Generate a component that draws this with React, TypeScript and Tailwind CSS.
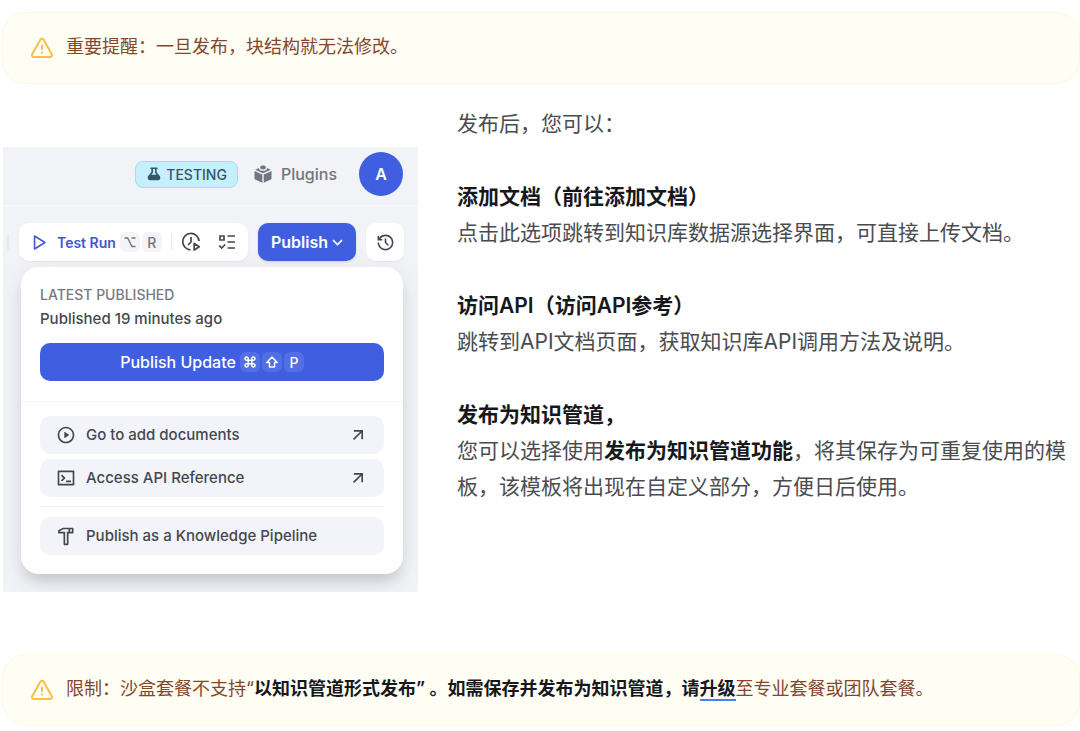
import React from 'react';
import {
  RiArrowDownSLine,
  RiArrowRightUpLine,
  RiHammerLine,
  RiHistoryLine,
  RiPlayCircleLine,
  RiPlayLargeLine,
  RiTerminalBoxLine,
} from 'react-icons/ri';

const WarningIcon = () => (
  <svg className="h-6 w-6 shrink-0 text-[#f7bf45]" viewBox="0 0 24 24" fill="none" stroke="currentColor" strokeWidth="2" strokeLinecap="round" strokeLinejoin="round">
    <path d="M10.5 3.6 2.2 18.2A1.8 1.8 0 0 0 3.8 21h16.4a1.8 1.8 0 0 0 1.6-2.8L13.5 3.6a1.75 1.75 0 0 0-3 0Z" />
    <path d="M12 9.5v3.5M12 16.5v.2" />
  </svg>
);

const FlaskIcon = () => (
  <svg className="h-4 w-4" viewBox="0 0 16 16" fill="none">
    <path d="M5 2.200h6M6.200 2.500v3.700L4.200 9M9.800 2.500v3.700l2 2.800" stroke="currentColor" strokeWidth="1.600" strokeLinecap="round" strokeLinejoin="round" />
    <path d="M4.200 8.800h7.600c1.700 0 2.500 1.400 2.500 2.900 0 1.600-.8 2.500-2.300 2.500H4c-1.500 0-2.300-.9-2.300-2.500 0-1.500.8-2.900 2.500-2.900Z" fill="currentColor" />
  </svg>
);

const PluginIcon = () => (
  <svg className="h-5 w-5" viewBox="0 0 20 20" fill="currentColor">
    <path d="M7.2 3.1c0-.9 1.2-1.6 2.8-1.6s2.8.7 2.8 1.6v.7c0 .9-1.2 1.6-2.8 1.6s-2.8-.7-2.8-1.6v-.7Z" />
    <path d="M6 4 2.2 5.8 10 9.3l7.8-3.5L14 4v.4C14 5.800 12.300 6.800 10 6.800S6 5.800 6 4.400V4Z" />
    <path d="M1.500 7 9.300 10.500v8.200l-7.200-3.300a1 1 0 0 1-.6-.9V7ZM18.500 7l-7.800 3.500v8.200l7.200-3.300a1 1 0 0 0 .6-.9V7Z" />
  </svg>
);

const ClockPlayIcon = () => (
  <svg className="h-5 w-5" viewBox="0 0 20 20" fill="none" stroke="currentColor" strokeWidth="1.700" strokeLinejoin="round">
    <path d="M9.500 17.800A8.200 8.200 0 1 1 18.100 9" />
    <path d="M10 5v5l-3 3" />
    <path d="M13.200 11.500v6.500l5-3.250-5-3.250Z" />
  </svg>
);

const ChecklistIcon = () => (
  <svg className="h-5 w-5" viewBox="0 0 20 20" fill="none" stroke="currentColor" strokeWidth="1.700">
    <path d="M3 4h4v4H3zM10.500 4H18M10.500 10H18M10.500 16H18M2.300 13.500 4.700 16l3.500-3.500" />
  </svg>
);

const OptionKey = () => (
  <svg className="h-3 w-3" viewBox="0 0 12 12" fill="none" stroke="currentColor" strokeWidth="1.400">
    <path d="M.5 2h3.200l4.300 8.500h3.500M7.500 2h4" />
  </svg>
);

const CommandKey = () => (
  <svg className="h-3 w-3" viewBox="0 0 12 12" fill="none" stroke="currentColor" strokeWidth="1.500">
    <path d="M4.200 4.200h3.600v3.600H4.200zM4.200 4.200V2.700a1.600 1.600 0 1 0-1.600 1.500h1.600ZM7.800 4.200V2.700a1.600 1.600 0 1 1 1.600 1.500H7.800ZM4.200 7.800v1.500a1.600 1.600 0 1 1-1.600-1.500h1.600ZM7.800 7.800v1.500a1.600 1.600 0 1 0 1.600-1.500H7.800Z" />
  </svg>
);

const ShiftKey = () => (
  <svg className="h-3 w-3" viewBox="0 0 12 12" fill="none" stroke="currentColor" strokeWidth="1.500" strokeLinejoin="round">
    <path d="M6 1 .8 6.500h2.700V11h5V6.500h2.700L6 1Z" />
  </svg>
);

const Alert = ({ children }: { children: React.ReactNode }) => (
  <div className="flex items-start gap-3 rounded-3xl border border-[#fbf8dc] bg-[#fffef5] px-[27px] pt-5 pb-[22px]">
    <div className="pt-[3px]">
      <WarningIcon />
    </div>
    <p className="text-[18px] leading-7 text-[#84472a]">{children}</p>
  </div>
);

const MenuItem = ({ icon, label, external }: { icon: React.ReactNode; label: string; external?: boolean }) => (
  <button className="flex h-[38px] w-full items-center gap-2 rounded-[10px] bg-[#f3f4f9] px-4 text-[#44474f]">
    <span className="flex w-[22px] text-[20px]">{icon}</span>
    <span className="flex-1 text-left text-[15px] font-medium">{label}</span>
    {external && <RiArrowRightUpLine className="text-[20px]" />}
  </button>
);

const PublishPanel = () => (
  <div className="w-[415px] shrink-0 overflow-hidden bg-[#f2f3f7] pb-[18px]">
    <div className="flex h-[60px] items-center justify-end border-b-2 border-[#f7f8fb] pr-[15px] pb-1">
      <span className="flex h-[27px] items-center gap-1 rounded-lg border border-[#9edff3] bg-[#c6effc] px-[10px] text-[14px] font-medium text-[#33566a]">
        <FlaskIcon />
        TESTING
      </span>
      <a href="#plugins" className="ml-[15px] flex items-center gap-2 text-[16px] font-medium text-[#73757f]">
        <PluginIcon />
        Plugins
      </a>
      <button className="ml-[22px] flex h-11 w-11 items-center justify-center rounded-full bg-[#3f5fe0] text-[16px] font-semibold text-white">A</button>
    </div>

    <div className="flex items-center pt-4 pr-[14px] pl-1">
      <div className="h-4 w-3 border-l-2 border-[#e8e9ee]" />
      <div className="flex h-[38px] flex-1 items-center rounded-[10px] bg-white px-[10px] text-[#44474f] shadow-xs">
        <button className="flex items-center gap-[9px] text-[14px] font-semibold whitespace-nowrap text-[#4257cf]">
          <RiPlayLargeLine className="text-[19px]" />
          Test Run
        </button>
        <span className="ml-1 flex h-5 w-5 shrink-0 items-center justify-center rounded-md bg-[#f3f4f7] text-[#72747c]">
          <OptionKey />
        </span>
        <span className="ml-[2px] flex h-5 w-5 shrink-0 items-center justify-center rounded-md bg-[#f3f4f7] text-[14px] font-medium text-[#72747c]">R</span>
        <span className="mx-[9px] h-4 w-px bg-[#e6e7ec]" />
        <button aria-label="Run history">
          <ClockPlayIcon />
        </button>
        <button className="ml-4" aria-label="Checklist">
          <ChecklistIcon />
        </button>
      </div>
      <button className="ml-[10px] flex h-[38px] w-[98px] items-center justify-center rounded-[10px] bg-[#3f5fe0] pl-1 text-[16px] font-semibold text-white shadow-sm">
        Publish
        <RiArrowDownSLine className="text-[19px]" />
      </button>
      <button className="ml-[10px] flex h-[38px] w-[38px] items-center justify-center rounded-[10px] bg-white text-[19px] text-[#44474f] shadow-xs" aria-label="Version history">
        <RiHistoryLine />
      </button>
    </div>

    <div className="mt-[6px] mr-[15px] ml-[18px] rounded-[18px] bg-white px-[19px] pt-[18px] pb-[19px] shadow-[0_10px_14px_-4px_rgba(30,32,50,0.18),0_6px_30px_rgba(30,32,50,0.07)]">
      <div className="text-[14px] leading-5 font-medium text-[#777982]">LATEST PUBLISHED</div>
      <div className="mt-[2px] text-[15px] leading-6 font-medium text-[#44474f]">Published 19 minutes ago</div>
      <button className="mt-3 flex h-[38px] w-full items-center justify-center rounded-[10px] bg-[#3f5fe0] text-[16px] font-medium text-white">
        Publish Update
        <span className="ml-1 flex gap-[2px] text-[14px]">
          <span className="flex h-5 w-5 items-center justify-center rounded-md bg-white/10"><CommandKey /></span>
          <span className="flex h-5 w-5 items-center justify-center rounded-md bg-white/10"><ShiftKey /></span>
          <span className="flex h-5 w-5 items-center justify-center rounded-md bg-white/10">P</span>
        </span>
      </button>
      <div className="-mx-[19px] mt-5 border-t border-[#f5f5f8]" />
      <div className="mt-[14px] flex flex-col gap-[5px]">
        <MenuItem icon={<RiPlayCircleLine />} label="Go to add documents" external />
        <MenuItem icon={<RiTerminalBoxLine />} label="Access API Reference" external />
      </div>
      <div className="mt-[9px] mb-[10px] border-t border-[#eeeff3]" />
      <MenuItem icon={<RiHammerLine />} label="Publish as a Knowledge Pipeline" />
    </div>
  </div>
);

const App = () => {
  return (
    <div className="bg-white pt-3 pl-[2px] font-['Inter','Noto_Sans_CJK_SC',sans-serif]" lang="zh-CN">
      <Alert>重要提醒：一旦发布，块结构就无法修改。</Alert>

      <div className="mt-[22px] flex items-center gap-[39px] pl-px">
        <div className="pt-[41px] pb-[62px]">
          <PublishPanel />
        </div>
        <div className="flex flex-1 flex-col gap-[37px] self-start text-[21px] leading-9 text-[#4a4c50] [&_strong]:font-semibold [&_strong]:text-[#16181c]">
          <p>发布后，您可以：</p>
          <p>
            <strong>添加文档（前往添加文档）</strong>
            <br />
            点击此选项跳转到知识库数据源选择界面，可直接上传文档。
          </p>
          <p>
            <strong>访问API（访问API参考）</strong>
            <br />
            跳转到API文档页面，获取知识库API调用方法及说明。
          </p>
          <p>
            <strong>发布为知识管道，</strong>
            <br />
            您可以选择使用<strong>发布为知识管道功能</strong>，将其保存为可重复使用的模板，该模板将出现在自定义部分，方便日后使用。
          </p>
        </div>
      </div>

      <Alert>
        限制：沙盒套餐不支持“
        <strong className="font-semibold text-[#16181c]">
          以知识管道形式发布” 。如需保存并发布为知识管道，请
          <a href="#upgrade" className="border-b-2 border-[#4a80ee]">升级</a>
        </strong>
        至专业套餐或团队套餐。
      </Alert>
    </div>
  );
};

export default App;
